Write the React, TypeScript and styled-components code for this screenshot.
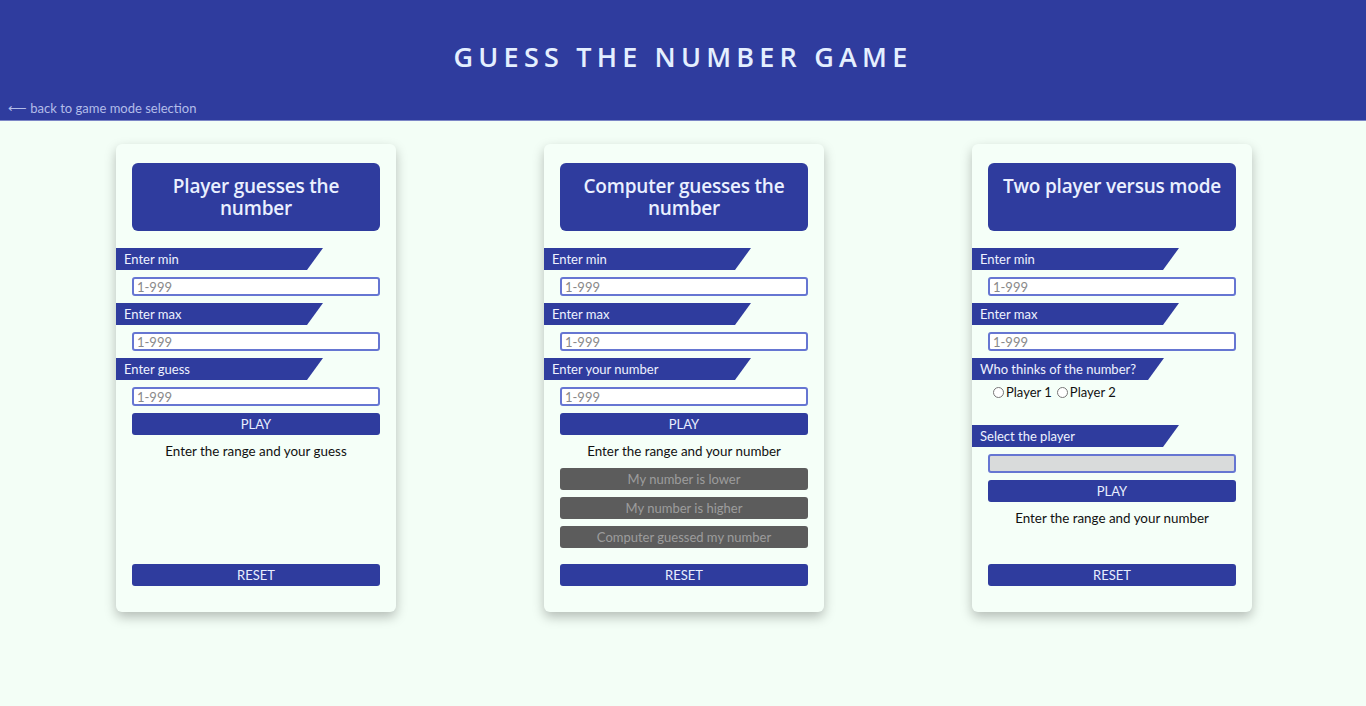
import React from "react";
import styled, { createGlobalStyle } from "styled-components";

const GlobalStyle = createGlobalStyle`
  html, body { margin: 0; padding: 0; }
  body {
    background: #f3fef6;
    font-family: Lato, "Open Sans", sans-serif;
    color: #111;
    min-height: 706px;
  }
  * { box-sizing: border-box; }
`;

const Header = styled.header`
  background: #2f3c9e;
  height: 121px;
  border-bottom: 1px solid #7c86c6;
  display: flex;
  flex-direction: column;
`;

const Title = styled.h1`
  margin: 0;
  padding-top: 39px;
  text-align: center;
  font-family: "Open Sans", Lato, sans-serif;
  font-weight: 600;
  font-size: 27px;
  letter-spacing: 5.2px;
  color: #e4efff;
  line-height: 36px;
`;

const BackLink = styled.a`
  margin-top: auto;
  margin-bottom: 4px;
  padding-left: 8px;
  font-size: 13px;
  line-height: 16px;
  color: #b3bde9;
  text-decoration: none;
`;

const Main = styled.main`
  display: flex;
  justify-content: center;
  gap: 148px;
  padding: 23px 0 40px 2px;
`;

const Card = styled.section`
  width: 280px;
  height: 468px;
  background: #f5fff8;
  border-radius: 6px;
  box-shadow: 0 5px 12px rgba(0, 0, 0, 0.26);
  padding: 19px 16px 26px;
  display: flex;
  flex-direction: column;
  gap: 7px;
`;

const CardTitle = styled.h2`
  margin: 0 0 10px;
  height: 68px;
  flex-shrink: 0;
  background: #2f3c9e;
  border-radius: 6px;
  color: #eaf0ff;
  font-family: "Open Sans", Lato, sans-serif;
  font-weight: 600;
  font-size: 19px;
  line-height: 22px;
  text-align: center;
  padding: 12px 14px 0;
  letter-spacing: -0.2px;
`;

const Label = styled.div<{ $w: number }>`
  margin-left: -16px;
  width: ${(p) => p.$w}px;
  height: 22px;
  flex-shrink: 0;
  background: #2f3c9e;
  color: #eef2ff;
  font-size: 13px;
  line-height: 22px;
  padding-left: 8px;
  clip-path: polygon(0 0, 100% 0, calc(100% - 16px) 100%, 0 100%);
`;

const Input = styled.input<{ $disabled?: boolean }>`
  width: 100%;
  height: 19px;
  flex-shrink: 0;
  border: 2px solid #6676d2;
  border-radius: 3px;
  background: ${(p) => (p.$disabled ? "#d9dbdb" : "#fff")};
  font-family: Lato, sans-serif;
  font-size: 13px;
  padding: 0 3px;
  outline: none;
  &::placeholder { color: #8a8a8a; }
`;

const Button = styled.button<{ $gray?: boolean }>`
  width: 100%;
  height: 22px;
  flex-shrink: 0;
  border: none;
  border-radius: 3px;
  background: ${(p) => (p.$gray ? "#5c5c5c" : "#2f3c9e")};
  color: ${(p) => (p.$gray ? "#9c9c9c" : "#e8eeff")};
  font-family: Lato, sans-serif;
  font-size: 13px;
  line-height: 22px;
  padding: 0;
`;

const ResetButton = styled(Button)`
  margin-top: auto;
`;

const Message = styled.p`
  margin: 0;
  height: 19px;
  line-height: 19px;
  font-size: 13.4px;
  text-align: center;
  color: #111;
`;

const RadioGroup = styled.div`
  margin-top: -3px;
  height: 34px;
  flex-shrink: 0;
  font-size: 13px;
  line-height: 16px;
  display: flex;
  align-items: flex-start;
  input { margin: 3px 2px 0 5px; width: 11px; height: 11px; }
`;

const RadioLabel = styled.label`
  display: inline-flex;
  align-items: flex-start;
`;

export default function App() {
  return (
    <>
      <GlobalStyle />
      <Header>
        <Title>GUESS THE NUMBER GAME</Title>
        <BackLink href="#">⟵ back to game mode selection</BackLink>
      </Header>
      <Main>
        <Card>
          <CardTitle>Player guesses the number</CardTitle>
          <Label $w={207}>Enter min</Label>
          <Input placeholder="1-999" />
          <Label $w={207}>Enter max</Label>
          <Input placeholder="1-999" />
          <Label $w={207}>Enter guess</Label>
          <Input placeholder="1-999" />
          <Button>PLAY</Button>
          <Message>Enter the range and your guess</Message>
          <ResetButton>RESET</ResetButton>
        </Card>
        <Card>
          <CardTitle>Computer guesses the number</CardTitle>
          <Label $w={207}>Enter min</Label>
          <Input placeholder="1-999" />
          <Label $w={207}>Enter max</Label>
          <Input placeholder="1-999" />
          <Label $w={207}>Enter your number</Label>
          <Input placeholder="1-999" />
          <Button>PLAY</Button>
          <Message>Enter the range and your number</Message>
          <Button $gray>My number is lower</Button>
          <Button $gray>My number is higher</Button>
          <Button $gray>Computer guessed my number</Button>
          <ResetButton>RESET</ResetButton>
        </Card>
        <Card>
          <CardTitle>Two player versus mode</CardTitle>
          <Label $w={207}>Enter min</Label>
          <Input placeholder="1-999" />
          <Label $w={207}>Enter max</Label>
          <Input placeholder="1-999" />
          <Label $w={192}>Who thinks of the number?</Label>
          <RadioGroup>
            <RadioLabel>
              <input type="radio" name="who" />
              Player 1
            </RadioLabel>
            <RadioLabel>
              <input type="radio" name="who" />
              Player 2
            </RadioLabel>
          </RadioGroup>
          <Label $w={207}>Select the player</Label>
          <Input $disabled disabled />
          <Button>PLAY</Button>
          <Message>Enter the range and your number</Message>
          <ResetButton>RESET</ResetButton>
        </Card>
      </Main>
    </>
  );
}
